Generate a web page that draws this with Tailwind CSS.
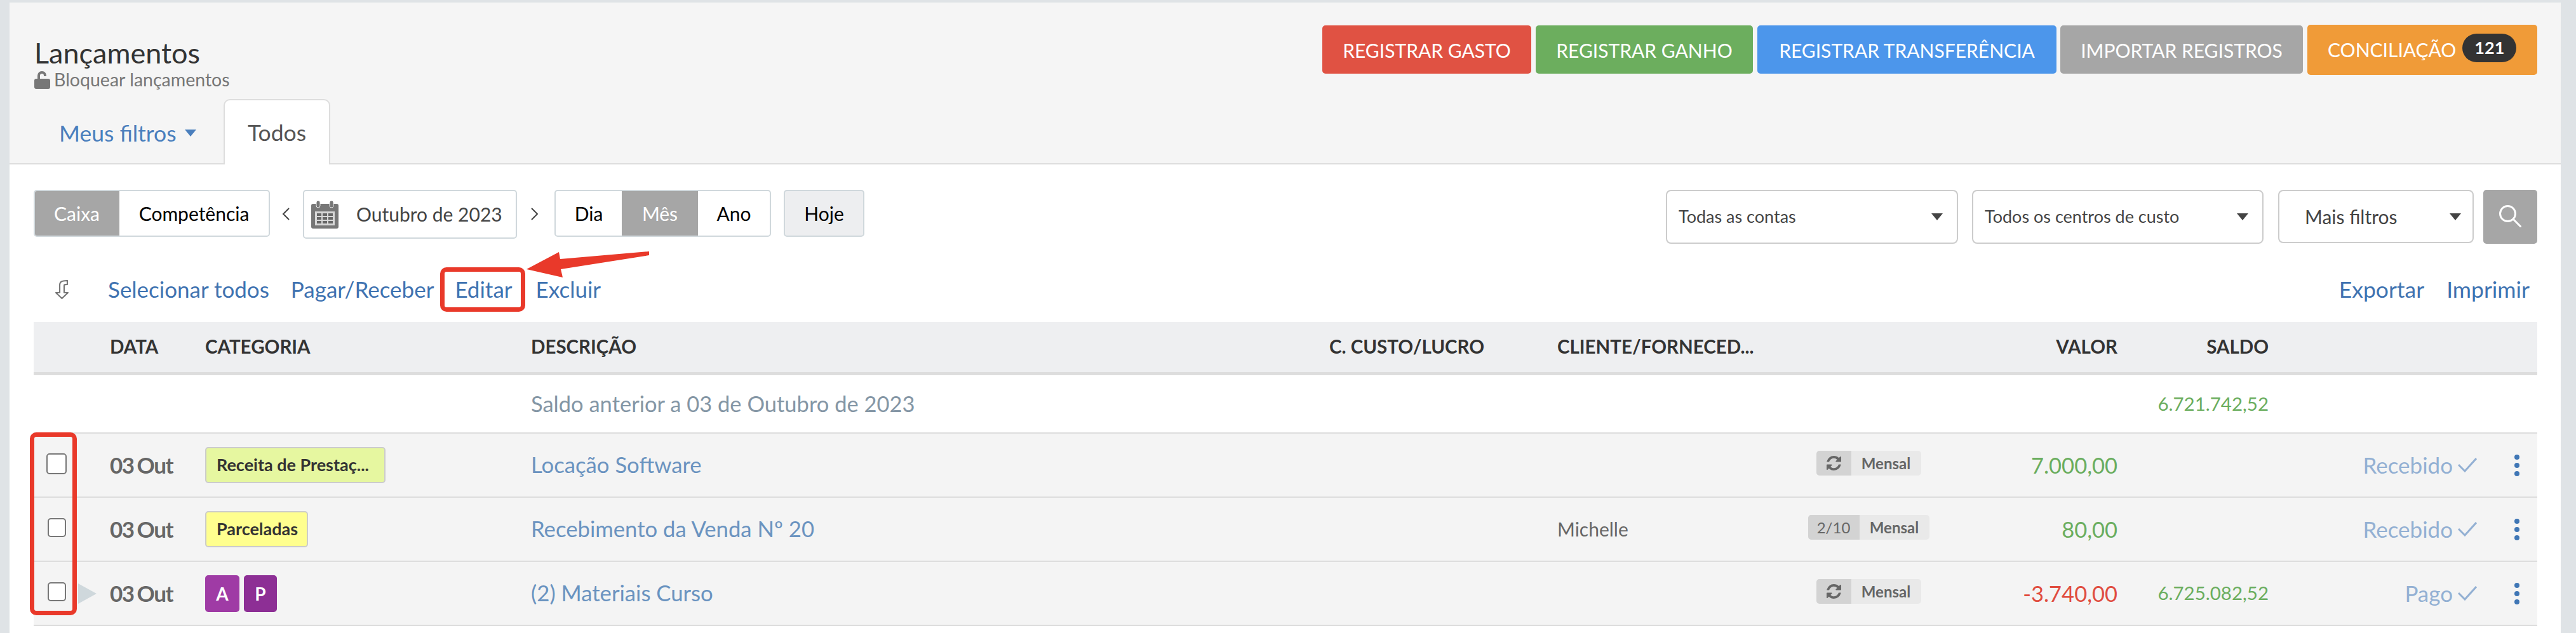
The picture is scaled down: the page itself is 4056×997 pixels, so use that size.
<!DOCTYPE html>
<html lang="pt-BR">
<head>
    <meta charset="UTF-8">
    <title>Lançamentos</title>
    <script src="https://cdn.jsdelivr.net/npm/@tailwindcss/browser@4"></script>
</head>
<body class="bg-[#dfe3e6] font-['Lato',sans-serif] text-[#333] h-[997px] overflow-hidden">
    <div class="relative ml-[15px] mt-[4px] w-[4017px] h-[993px] bg-white">

        <!-- Cabeçalho -->
        <div class="h-[255px] bg-[#f5f5f5] border-b-2 border-[#ddd] relative">
            <div class="flex justify-between pl-[39px] pr-[37px]">
                <div class="pt-[52px]">
                    <h1 class="text-[45px] leading-[54px] text-[#333]">Lançamentos</h1>
                    <div class="flex items-center gap-[6px] text-[28.5px] leading-[30px] text-[#777]">
                        <svg class="w-[25px] h-[29px]" viewBox="0 0 25 29" fill="#777"><path d="M3 13h19a3 3 0 0 1 3 3v10a3 3 0 0 1-3 3H3a3 3 0 0 1-3-3V16a3 3 0 0 1 3-3z"/><path d="M5 14V8a7 7 0 0 1 14 0v1h-4V8a3 3 0 0 0-6 0v6z"/></svg>
                        <span>Bloquear lançamentos</span>
                    </div>
                </div>
                <div class="flex items-start gap-[7px] mt-[36px] text-[30px] text-white">
                    <a class="w-[329px] h-[76px] pt-[2px] flex items-center justify-center rounded-[5px] bg-[#e05243]">REGISTRAR GASTO</a>
                    <a class="w-[342px] h-[76px] pt-[2px] flex items-center justify-center rounded-[5px] bg-[#6cae5e]">REGISTRAR GANHO</a>
                    <a class="w-[471px] h-[76px] pt-[2px] flex items-center justify-center rounded-[5px] bg-[#4c96eb]">REGISTRAR TRANSFERÊNCIA</a>
                    <a class="w-[382px] h-[76px] pt-[2px] -ml-[1px] flex items-center justify-center rounded-[5px] bg-[#a6a6a6]">IMPORTAR REGISTROS</a>
                    <a class="w-[362px] h-[79px] -mt-[1px] pl-[32px] flex items-center gap-[10px] rounded-[5px] bg-[#f09b38]">CONCILIAÇÃO<span class="h-[45px] w-[85px] -mt-[6px] rounded-full bg-[#333] flex items-center justify-center text-[27px] font-bold">121</span></a>
                </div>
            </div>
            <div class="absolute left-[39px] bottom-[-2px] flex items-end h-[103px]">
                <a class="w-[298px] h-[99px] flex items-center pl-[39px] gap-[13px] text-[35.5px] text-[#4a7fbd]">Meus filtros<span class="w-0 h-0 border-x-[9px] border-x-transparent border-t-[11px] border-t-[#4a7fbd]"></span></a>
                <a class="w-[168px] h-[103px] flex items-center justify-center text-[35.5px] text-[#555] bg-white border-2 border-b-0 border-[#ddd] rounded-t-[10px]">Todos</a>
            </div>
        </div>

        <!-- Filtros -->
        <div class="flex justify-between pl-[38px] pr-[37px] pt-[40px] h-[129px]">
            <div class="flex items-start text-[30px]">
                <div class="flex h-[74px] rounded-[5px] border-2 border-[#d0d8dc] overflow-hidden text-black">
                    <span class="w-[134px] -ml-[1px] bg-[#a6a6a6] text-white flex items-center justify-center">Caixa</span>
                    <span class="w-[235px] flex items-center justify-center">Competência</span>
                </div>
                <svg class="w-[12px] h-[20px] mt-[28px] ml-[19px] mr-[21px]" viewBox="0 0 12 20" fill="none" stroke="#444" stroke-width="2"><path d="M11 1 2 10l9 9"/></svg>
                <div class="flex items-center w-[337px] h-[77px] rounded-[5px] border-2 border-[#d0d8dc] pl-[11px] text-[#444]">
                    <svg class="w-[43px] h-[44px]" viewBox="0 0 43 44"><rect x="0" y="5" width="43" height="39" rx="3" fill="#777"/><rect x="6" y="17" width="31" height="22" fill="#d8d8d8"/><rect x="8" y="0" width="6" height="11" rx="3" fill="#777" stroke="#eee" stroke-width="1"/><rect x="29" y="0" width="6" height="11" rx="3" fill="#777" stroke="#eee" stroke-width="1"/><g fill="#666"><rect x="9" y="20" width="7" height="4"/><rect x="18" y="20" width="7" height="4"/><rect x="27" y="20" width="7" height="4"/><rect x="9" y="26" width="7" height="4"/><rect x="18" y="26" width="7" height="4"/><rect x="27" y="26" width="7" height="4"/><rect x="9" y="32" width="7" height="4"/><rect x="18" y="32" width="7" height="4"/><rect x="27" y="32" width="7" height="4"/></g></svg>
                    <span class="ml-[28px]">Outubro de 2023</span>
                </div>
                <svg class="w-[12px] h-[20px] mt-[28px] ml-[22px] mr-[25px]" viewBox="0 0 12 20" fill="none" stroke="#444" stroke-width="2"><path d="m1 1 9 9-9 9"/></svg>
                <div class="flex h-[74px] rounded-[5px] border-2 border-[#d0d8dc] overflow-hidden text-black">
                    <span class="w-[104px] flex items-center justify-center">Dia</span>
                    <span class="w-[120px] bg-[#a6a6a6] text-white flex items-center justify-center">Mês</span>
                    <span class="w-[113px] flex items-center justify-center">Ano</span>
                </div>
                <div class="ml-[20px] w-[127px] h-[74px] rounded-[5px] bg-[#edeef0] border-2 border-[#d0d8dc] text-black flex items-center justify-center">Hoje</div>
            </div>
            <div class="flex items-start text-[27px] text-[#444]">
                <div class="w-[460px] h-[85px] rounded-[8px] border-2 border-[#ccc] flex items-center justify-between pl-[18px] pr-[22px]">Todas as contas<span class="w-0 h-0 border-x-[9px] border-x-transparent border-t-[11px] border-t-[#444]"></span></div>
                <div class="ml-[22px] w-[459px] h-[85px] rounded-[8px] border-2 border-[#ccc] flex items-center justify-between pl-[18px] pr-[22px]">Todos os centros de custo<span class="w-0 h-0 border-x-[9px] border-x-transparent border-t-[11px] border-t-[#444]"></span></div>
                <div class="ml-[23px] w-[308px] h-[84px] rounded-[8px] border-2 border-[#ccc] flex items-center justify-between pl-[40px] pr-[18px] text-[30px]">Mais filtros<span class="w-0 h-0 border-x-[9px] border-x-transparent border-t-[11px] border-t-[#444]"></span></div>
                <div class="ml-[15px] w-[85px] h-[85px] rounded-[5px] bg-[#a6a6a6] flex items-center justify-center">
                    <svg class="w-[35px] h-[35px] -mt-[3px]" viewBox="0 0 35 35" fill="none" stroke="#fff" stroke-width="3"><circle cx="13.5" cy="13.5" r="12"/><path d="m22 22 12 12" stroke-linecap="round"/></svg>
                </div>
            </div>
        </div>

        <!-- Ações -->
        <div class="flex justify-between items-center pl-[72px] pr-[49px] h-[119px] pt-[16px] text-[35px] text-[#3f73b1]">
            <div class="flex items-center">
                <svg class="w-[21px] h-[30px]" viewBox="0 0 21 30" fill="none" stroke="#777" stroke-width="2.2" stroke-linejoin="round"><path d="M7 20V8c0-4 2-6 6-6.500l6-.5v6l-3 .2c-1.500.1-2 .8-2 2V20h6l-9.500 9L1 20z"/></svg>
                <a class="ml-[62px]">Selecionar todos</a>
                <a class="ml-[34px]">Pagar/Receber</a>
                <a class="ml-[33px]">Editar</a>
                <a class="ml-[37px]">Excluir</a>
            </div>
            <div class="flex items-center gap-[35px] text-[35.5px]">
                <a>Exportar</a>
                <a>Imprimir</a>
            </div>
        </div>

        <!-- Tabela -->
        <div class="mx-[38px] w-[3942px] text-[#666]">
            <div class="grid grid-cols-[120px_150px_513px_1257px_359px_380px_220px_282px_238px_328px_95px] h-[84px] items-center bg-[#eeeff1] border-b-[5px] border-[#ddd] text-[29.500px] font-bold text-[#333] uppercase">
                <span></span>
                <span>Data</span>
                <span>Categoria</span>
                <span>Descrição</span>
                <span>C. Custo/Lucro</span>
                <span class="whitespace-nowrap">Cliente/Forneced...</span>
                <span></span>
                <span class="text-right">Valor</span>
                <span class="text-right">Saldo</span>
            </div>

            <div class="grid grid-cols-[120px_150px_513px_1257px_359px_380px_220px_282px_238px_328px_95px] h-[92px] items-center bg-white border-b-2 border-[#ddd]">
                <span></span>
                <span></span>
                <span></span>
                <span class="text-[34.500px] text-[#8496a5] whitespace-nowrap">Saldo anterior a 03 de Outubro de 2023</span>
                <span></span>
                <span></span>
                <span></span>
                <span></span>
                <span class="text-right text-[29.500px] text-[#6aad5e]">6.721.742,52</span>
            </div>

            <div class="grid grid-cols-[120px_150px_513px_1257px_359px_380px_220px_282px_238px_328px_95px] h-[101px] items-center bg-[#f4f4f4] border-b-2 border-[#ddd]">
                <div class="flex pl-[20px]"><span class="w-[32px] h-[33px] -mt-[5px] rounded-[5px] border-2 border-[#777] bg-white"></span></div>
                <span class="text-[35px] font-bold tracking-[-1.500px] [word-spacing:-2px] whitespace-nowrap">03 Out</span>
                <div class="flex"><span class="w-[284px] h-[57px] rounded-[5px] border-2 border-[#ccc] bg-[#e6f7a0] flex items-center pl-[16px] text-[27px] font-bold text-[#333]">Receita de Prestaç...</span></div>
                <span class="text-[34.700px] text-[#6a93c0]">Locação Software</span>
                <span></span>
                <span></span>
                <div class="flex justify-center -mt-[6px]"><div class="flex h-[39px] rounded-[5px] overflow-hidden bg-[#e9e9e9] text-[24px] font-bold"><span class="w-[55px] bg-[#d3d3d3] flex items-center justify-center"><svg class="w-[23px] h-[23px]" viewBox="0 0 1536 1536" fill="#666"><path d="M1511 928q0 5-1 7-64 268-268 434.5t-478 166.5q-146 0-282.5-55t-243.5-157l-129 129q-19 19-45 19t-45-19-19-45v-448q0-26 19-45t45-19h448q26 0 45 19t19 45-19 45l-137 137q71 66 161 102t187 36q134 0 250-65t186-179q11-17 53-117 8-23 30-23h192q13 0 22.5 9.5t9.5 22.5zm25-800v448q0 26-19 45t-45 19h-448q-26 0-45-19t-19-45 19-45l138-138q-148-137-349-137-134 0-250 65t-186 179q-11 17-53 117-8 23-30 23h-199q-13 0-22.5-9.5t-9.5-22.5v-7q65-268 270-434.5t480-166.5q146 0 284 55.5t245 156.5l130-129q19-19 45-19t45 19 19 45z"/></svg></span><span class="w-[110px] flex items-center justify-center">Mensal</span></div></div>
                <span class="text-right text-[34.500px] text-[#6aad5e]">7.000,00</span>
                <span></span>
                <div class="flex items-center justify-end gap-[8px] text-[35px] text-[#93b0d3]">Recebido<svg class="w-[30px] h-[23px]" viewBox="0 0 30 23" fill="none" stroke="#93b0d3" stroke-width="3"><path d="m1 11 10 10L29 1"/></svg></div>
                <div class="flex flex-col gap-[5px] pl-[59px]"><span class="size-[8px] rounded-full bg-[#3f76b5]"></span><span class="size-[8px] rounded-full bg-[#3f76b5]"></span><span class="size-[8px] rounded-full bg-[#3f76b5]"></span></div>
            </div>

            <div class="grid grid-cols-[120px_150px_513px_1257px_359px_380px_220px_282px_238px_328px_95px] h-[101px] items-center bg-[#f4f4f4] border-b-2 border-[#ddd]">
                <div class="flex pl-[22px]"><span class="w-[29px] h-[30px] -mt-[5px] rounded-[5px] border-2 border-[#777] bg-white"></span></div>
                <span class="text-[35px] font-bold tracking-[-1.500px] [word-spacing:-2px] whitespace-nowrap">03 Out</span>
                <div class="flex"><span class="w-[162px] h-[57px] rounded-[5px] border-2 border-[#ccc] bg-[#ffff8f] flex items-center pl-[16px] text-[27px] font-bold text-[#333]">Parceladas</span></div>
                <span class="text-[34.700px] text-[#6a93c0]">Recebimento da Venda Nº 20</span>
                <span></span>
                <span class="text-[30px] text-[#666]">Michelle</span>
                <div class="flex justify-center -mt-[6px]"><div class="flex h-[39px] rounded-[5px] overflow-hidden bg-[#e9e9e9] text-[24px] font-bold"><span class="w-[81px] bg-[#d3d3d3] flex items-center justify-center font-normal">2/10</span><span class="w-[110px] flex items-center justify-center">Mensal</span></div></div>
                <span class="text-right text-[34.500px] text-[#6aad5e]">80,00</span>
                <span></span>
                <div class="flex items-center justify-end gap-[8px] text-[35px] text-[#93b0d3]">Recebido<svg class="w-[30px] h-[23px]" viewBox="0 0 30 23" fill="none" stroke="#93b0d3" stroke-width="3"><path d="m1 11 10 10L29 1"/></svg></div>
                <div class="flex flex-col gap-[5px] pl-[59px]"><span class="size-[8px] rounded-full bg-[#3f76b5]"></span><span class="size-[8px] rounded-full bg-[#3f76b5]"></span><span class="size-[8px] rounded-full bg-[#3f76b5]"></span></div>
            </div>

            <div class="grid grid-cols-[120px_150px_513px_1257px_359px_380px_220px_282px_238px_328px_95px] h-[101px] items-center bg-[#f4f4f4] border-b-2 border-[#ddd]">
                <div class="flex items-center pl-[22px]"><span class="w-[29px] h-[30px] -mt-[5px] rounded-[5px] border-2 border-[#777] bg-white"></span><span class="ml-[19px] w-0 h-0 border-y-[16px] border-y-transparent border-l-[29px] border-l-[#cfd8dc]"></span></div>
                <span class="text-[35px] font-bold tracking-[-1.500px] [word-spacing:-2px] whitespace-nowrap">03 Out</span>
                <div class="flex gap-[7px]"><span class="w-[54px] h-[58px] rounded-[5px] bg-[#9f3ba5] flex items-center justify-center text-[28px] font-bold text-white">A</span><span class="w-[52px] h-[58px] rounded-[5px] bg-[#8d2f95] flex items-center justify-center text-[28px] font-bold text-white">P</span></div>
                <span class="text-[34.700px] text-[#6a93c0]">(2) Materiais Curso</span>
                <span></span>
                <span></span>
                <div class="flex justify-center -mt-[6px]"><div class="flex h-[39px] rounded-[5px] overflow-hidden bg-[#e9e9e9] text-[24px] font-bold"><span class="w-[55px] bg-[#d3d3d3] flex items-center justify-center"><svg class="w-[23px] h-[23px]" viewBox="0 0 1536 1536" fill="#666"><path d="M1511 928q0 5-1 7-64 268-268 434.5t-478 166.5q-146 0-282.5-55t-243.5-157l-129 129q-19 19-45 19t-45-19-19-45v-448q0-26 19-45t45-19h448q26 0 45 19t19 45-19 45l-137 137q71 66 161 102t187 36q134 0 250-65t186-179q11-17 53-117 8-23 30-23h192q13 0 22.5 9.5t9.5 22.5zm25-800v448q0 26-19 45t-45 19h-448q-26 0-45-19t-19-45 19-45l138-138q-148-137-349-137-134 0-250 65t-186 179q-11 17-53 117-8 23-30 23h-199q-13 0-22.5-9.5t-9.5-22.5v-7q65-268 270-434.5t480-166.5q146 0 284 55.5t245 156.5l130-129q19-19 45-19t45 19 19 45z"/></svg></span><span class="w-[110px] flex items-center justify-center">Mensal</span></div></div>
                <span class="text-right text-[34.500px] text-[#e04c3f]">-3.740,00</span>
                <span class="text-right text-[29.500px] text-[#6aad5e]">6.725.082,52</span>
                <div class="flex items-center justify-end gap-[8px] text-[35px] text-[#93b0d3]">Pago<svg class="w-[30px] h-[23px]" viewBox="0 0 30 23" fill="none" stroke="#93b0d3" stroke-width="3"><path d="m1 11 10 10L29 1"/></svg></div>
                <div class="flex flex-col gap-[5px] pl-[59px]"><span class="size-[8px] rounded-full bg-[#3f76b5]"></span><span class="size-[8px] rounded-full bg-[#3f76b5]"></span><span class="size-[8px] rounded-full bg-[#3f76b5]"></span></div>
            </div>
        </div>

        <!-- Marcações em vermelho -->
        <div class="absolute left-[678px] top-[417px] w-[134px] h-[70px] border-[7px] border-[#e9392a] rounded-[10px]"></div>
        <div class="absolute left-[32px] top-[677px] w-[74px] h-[288px] border-[7px] border-[#e9392a] rounded-[10px]"></div>
        <svg class="absolute left-[814px] top-[392px] w-[193px] h-[41px]" viewBox="829 396 193 41" fill="#e9392a"><path d="M829 424 880 397l2 11 140-12v6l-139 22 3 13z"/></svg>
    </div>
</body>
</html>
